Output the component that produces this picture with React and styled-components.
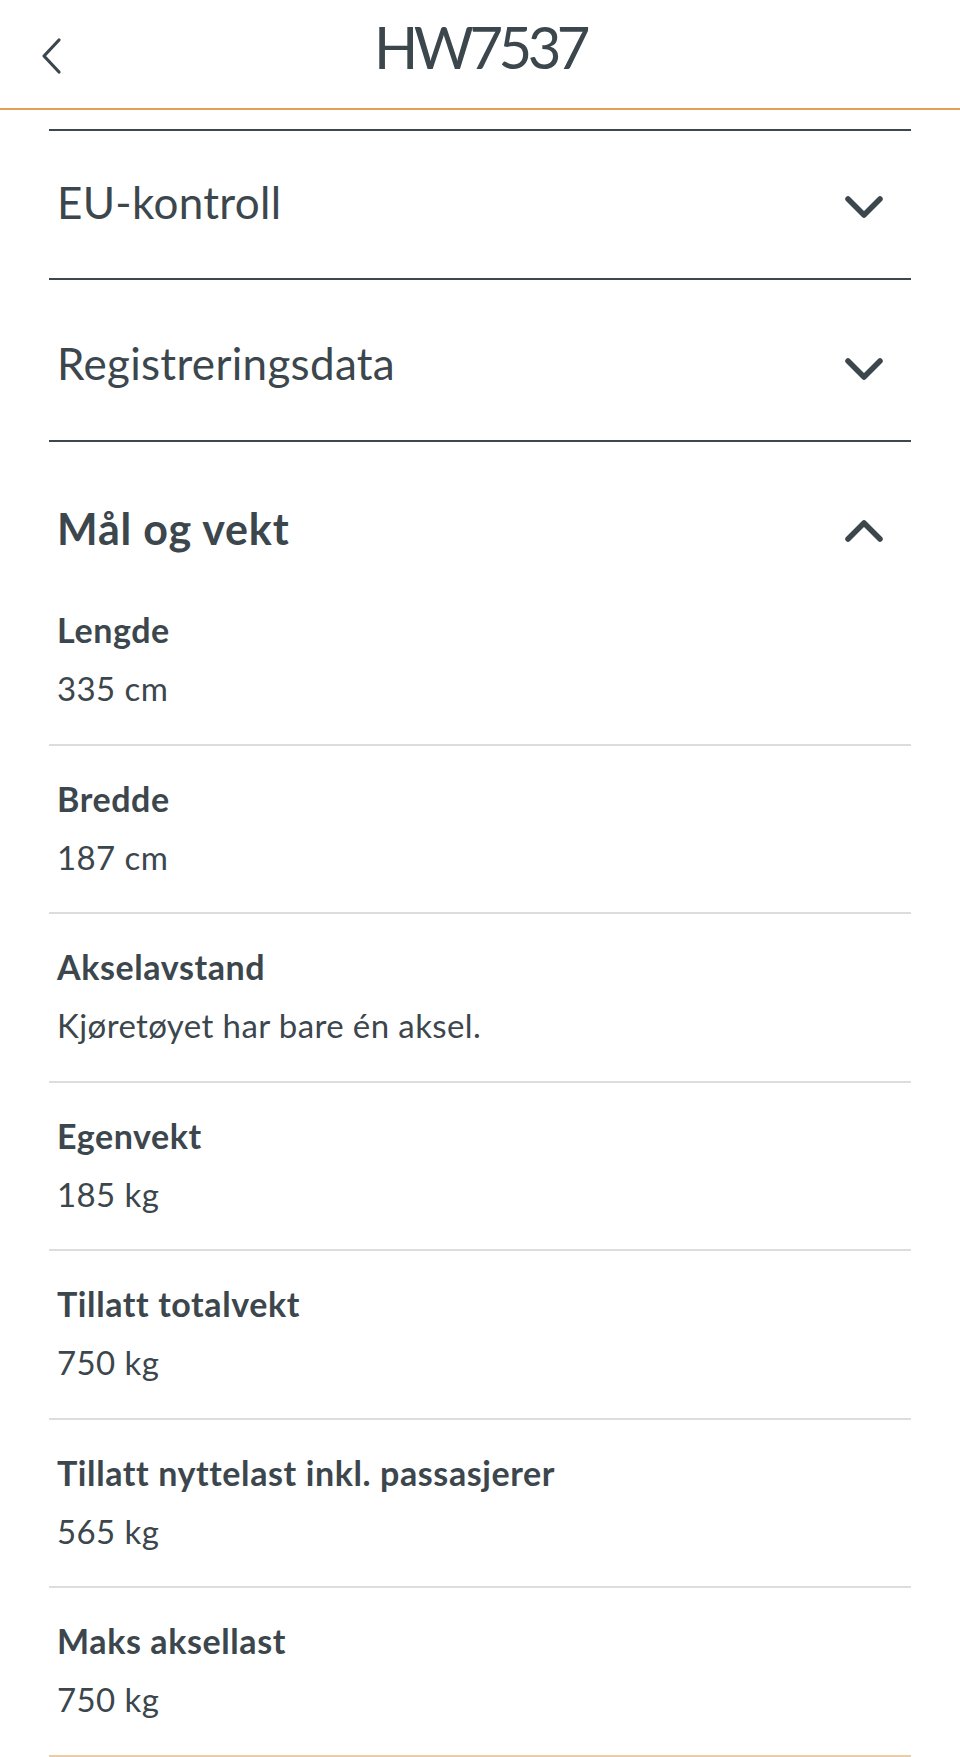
import React from "react";
import styled, { createGlobalStyle } from "styled-components";

const Global = createGlobalStyle`
  html, body { margin: 0; padding: 0; background: #fff; }
  body { font-family: Lato, "Open Sans", sans-serif; color: #3c464d; }
`;

const Page = styled.div`
  width: 960px;
  min-height: 1757px;
  background: #fff;
  overflow: hidden;
`;

const TopBar = styled.header`
  position: relative;
  height: 110px;
  border-bottom: 2px solid #e29f58;
  display: flex;
  align-items: center;
  justify-content: center;
  padding-bottom: 14px;
  box-sizing: border-box;
`;

const BackButton = styled.button`
  position: absolute;
  left: 40px;
  top: 37px;
  width: 24px;
  height: 38px;
  padding: 0;
  border: 0;
  background: none;
  display: flex;
  align-items: center;
  justify-content: center;
  color: #3c464d;
  cursor: pointer;
`;

const Title = styled.h1`
  margin: 0;
  font-size: 58px;
  line-height: 1;
  font-weight: 400;
  letter-spacing: -4.5px;
  color: #3c464d;
`;

const Content = styled.main`
  padding: 19px 49px 0;
  display: flex;
  flex-direction: column;
`;

const Section = styled.section`
  border-top: 2px solid #3e474e;
`;

const SectionHeader = styled.div`
  display: flex;
  align-items: center;
  justify-content: space-between;
  box-sizing: border-box;
  height: ${(p) => (p.$open ? "135px" : p.$first ? "147px" : "160px")};
  padding: ${(p) => (p.$open ? "38px 27px 0 8px" : p.$first ? "0 27px 5px 8px" : "7px 27px 0 8px")};
`;

const SectionTitle = styled.h2`
  margin: 0;
  font-size: ${(p) => (p.$open ? "43px" : "44px")};
  line-height: 1.2;
  font-weight: ${(p) => (p.$open ? 700 : 400)};
  letter-spacing: ${(p) => (p.$open ? "0.8px" : "0.3px")};
  color: #3c464d;
`;

const ChevronWrap = styled.span`
  display: flex;
  margin-top: ${(p) => (p.$up ? "5px" : "10px")};
`;

const Item = styled.div`
  padding: 33px 8px 35.5px;
  border-bottom: 2px solid ${(p) => (p.$last ? "#e9cda6" : "#dcdddd")};
  display: flex;
  flex-direction: column;
  gap: 18px;
`;

const Label = styled.div`
  font-size: 34px;
  line-height: 40px;
  font-weight: 700;
  letter-spacing: 0.6px;
  color: #3c464d;
`;

const Value = styled.div`
  font-size: 33px;
  line-height: 40px;
  font-weight: 400;
  letter-spacing: 0.4px;
  color: #3c464d;
`;

const Chevron = ({ up }) => (
  <ChevronWrap $up={up}>
    <svg width="40" height="24" viewBox="0 0 40 24" fill="none">
      <polyline
        points={up ? "4,20 20,4 36,20" : "4,4 20,20 36,4"}
        stroke="#3c464d"
        strokeWidth="5.5"
        strokeLinecap="round"
        strokeLinejoin="round"
      />
    </svg>
  </ChevronWrap>
);

const BackIcon = () => (
  <svg width="24" height="38" viewBox="0 0 24 38" fill="none">
    <polyline
      points="19,3 4,19 19,35"
      stroke="#3c464d"
      strokeWidth="3.2"
      strokeLinecap="round"
      strokeLinejoin="round"
    />
  </svg>
);

const items = [
  ["Lengde", "335 cm"],
  ["Bredde", "187 cm"],
  ["Akselavstand", "Kjøretøyet har bare én aksel."],
  ["Egenvekt", "185 kg"],
  ["Tillatt totalvekt", "750 kg"],
  ["Tillatt nyttelast inkl. passasjerer", "565 kg"],
  ["Maks aksellast", "750 kg"],
];

export default function App() {
  return (
    <Page>
      <Global />
      <TopBar>
        <BackButton aria-label="Tilbake">
          <BackIcon />
        </BackButton>
        <Title>HW7537</Title>
      </TopBar>
      <Content>
        <Section>
          <SectionHeader $first>
            <SectionTitle>EU-kontroll</SectionTitle>
            <Chevron />
          </SectionHeader>
        </Section>
        <Section>
          <SectionHeader>
            <SectionTitle>Registreringsdata</SectionTitle>
            <Chevron />
          </SectionHeader>
        </Section>
        <Section>
          <SectionHeader $open>
            <SectionTitle $open>Mål og vekt</SectionTitle>
            <Chevron up />
          </SectionHeader>
          {items.map(([label, value], i) => (
            <Item key={label} $last={i === items.length - 1}>
              <Label>{label}</Label>
              <Value>{value}</Value>
            </Item>
          ))}
        </Section>
      </Content>
    </Page>
  );
}
